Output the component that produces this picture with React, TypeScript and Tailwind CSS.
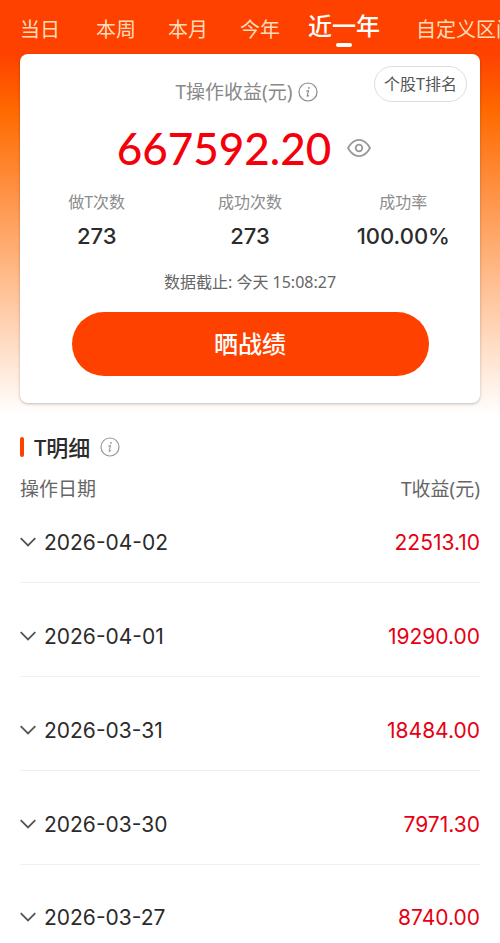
import { useState } from 'react';

const TEXT_FONT = "font-['Noto_Sans','Noto_Sans_CJK_SC',sans-serif]";
const NUMBER_FONT = "font-['Inter','Noto_Sans_CJK_SC',sans-serif]";

const tabs = [
  { label: '当日', pad: 'pl-5 pr-5' },
  { label: '本周', pad: 'px-4' },
  { label: '本月', pad: 'px-4' },
  { label: '今年', pad: 'px-4' },
  { label: '近一年', pad: 'pl-3 pr-5' },
  { label: '自定义区间', pad: 'px-4' },
];

const stats = [
  { label: '做T次数', value: '273' },
  { label: '成功次数', value: '273' },
  { label: '成功率', value: '100.00%' },
];

const records = [
  { date: '2026-04-02', profit: '22513.10' },
  { date: '2026-04-01', profit: '19290.00' },
  { date: '2026-03-31', profit: '18484.00' },
  { date: '2026-03-30', profit: '7971.30' },
  { date: '2026-03-27', profit: '8740.00' },
];

function InfoIcon() {
  return (
    <svg className="w-5 h-5" viewBox="0 0 20 20" fill="none" stroke="currentColor" aria-hidden="true">
      <circle cx="10" cy="10" r="9" strokeWidth="1.2" />
      <circle cx="10.9" cy="5.9" r="0.9" fill="currentColor" stroke="none" />
      <path d="M8.6 9.1l1.9-.6-1.3 5.3c-.1.6.4.7 1.5-.2" strokeWidth="1.1" strokeLinecap="round" strokeLinejoin="round" />
    </svg>
  );
}

function EyeIcon() {
  return (
    <svg className="w-6 h-5" viewBox="0 0 24 20" fill="none" stroke="currentColor" strokeWidth="1.8" aria-hidden="true">
      <path d="M1 10C4 4.6 7.6 1.9 12 1.9S20 4.6 23 10C20 15.4 16.4 18.1 12 18.1S4 15.4 1 10Z" strokeLinejoin="round" />
      <circle cx="12" cy="10" r="3.3" />
    </svg>
  );
}

function ChevronIcon() {
  return (
    <svg className="w-4 h-4" viewBox="0 0 16 16" fill="none" stroke="currentColor" strokeWidth="1.8" aria-hidden="true">
      <path d="M0.7 3.2L8 10.4L15.3 3.2" />
    </svg>
  );
}

export default function App() {
  const [active, setActive] = useState('近一年');

  return (
    <div className={`${TEXT_FONT} bg-white text-[#2b2b2b]`}>
      <nav className="flex h-[54px] overflow-hidden bg-[#ff4100]">
        {tabs.map((tab) => (
          <button
            key={tab.label}
            type="button"
            onClick={() => setActive(tab.label)}
            className={`${tab.pad} relative shrink-0 whitespace-nowrap ${
              active === tab.label ? 'text-2xl font-medium text-white pb-0.5' : 'text-xl text-[#ffdcb8] pt-1.5'
            }`}
          >
            {tab.label}
            {active === tab.label && (
              <span className="absolute bottom-[7px] left-10 w-4 h-1 rounded-full bg-white" />
            )}
          </button>
        ))}
      </nav>

      <section className="px-5 pb-3 bg-[linear-gradient(to_bottom,#ff4100_0%,#ff6a00_16%,#ffffff_100%)]">
        <div className="relative pt-6 pb-[27px] rounded-lg bg-white shadow-[0_1px_3px_rgba(0,0,0,0.25)]">
          <button
            type="button"
            className="absolute top-3 right-[13px] w-[93px] h-9 rounded-full border border-[#dddddd] text-base text-[#555555]"
          >
            个股T排名
          </button>

          <div className="flex items-center justify-center gap-1.5 h-7 pr-1.5 text-[#888888]">
            <h1 className="text-[19px]">T操作收益(元)</h1>
            <InfoIcon />
          </div>

          <div className="flex items-center justify-center gap-4 h-[60px] mt-3 pr-3">
            <strong className="font-['Lato',sans-serif] text-[44px] font-medium text-[#f5000a]">667592.20</strong>
            <button type="button" aria-label="显示或隐藏收益" className="text-[#999999]">
              <EyeIcon />
            </button>
          </div>

          <dl className="grid grid-cols-3 text-center mt-2">
            {stats.map((stat) => (
              <div key={stat.label}>
                <dt className="text-base leading-8 text-[#8c8c8c]">{stat.label}</dt>
                <dd className={`${NUMBER_FONT} text-[22px] leading-9 font-medium`}>{stat.value}</dd>
              </div>
            ))}
          </dl>

          <p className="mt-4 text-center text-base text-[#666666]">数据截止: 今天 15:08:27</p>

          <button type="button" className="block w-[357px] max-w-full h-16 mt-[18px] mx-auto rounded-full bg-[#ff4100] text-2xl font-medium text-white">
            晒战绩
          </button>
        </div>
      </section>

      <section className="px-5 pt-4">
        <div className="flex items-center h-8">
          <span className="w-1 h-5 mr-[10px] rounded-sm bg-[#ff4100]" />
          <h2 className="text-[22px] font-medium">T明细</h2>
          <span className="ml-2.5 text-[#999999]">
            <InfoIcon />
          </span>
        </div>

        <table className="w-full mt-2">
          <thead>
            <tr className="h-9 text-[19px] text-[#666666]">
              <th className="text-left font-normal">操作日期</th>
              <th className="text-right font-normal">T收益(元)</th>
            </tr>
          </thead>
          <tbody className={`${NUMBER_FONT} text-[21px] leading-8`}>
            {records.map((record) => (
              <tr
                key={record.date}
                className="h-[94px] first:h-[75px] last:h-[78px] align-bottom border-b last:border-b-0 border-[#f0f0f0] *:pb-[23px] last:*:pb-2"
              >
                <td>
                  <button type="button" className="flex items-center gap-2">
                    <span className="text-[#555555]">
                      <ChevronIcon />
                    </span>
                    {record.date}
                  </button>
                </td>
                <td className="text-right text-[#e60012]">{record.profit}</td>
              </tr>
            ))}
          </tbody>
        </table>
      </section>
    </div>
  );
}
